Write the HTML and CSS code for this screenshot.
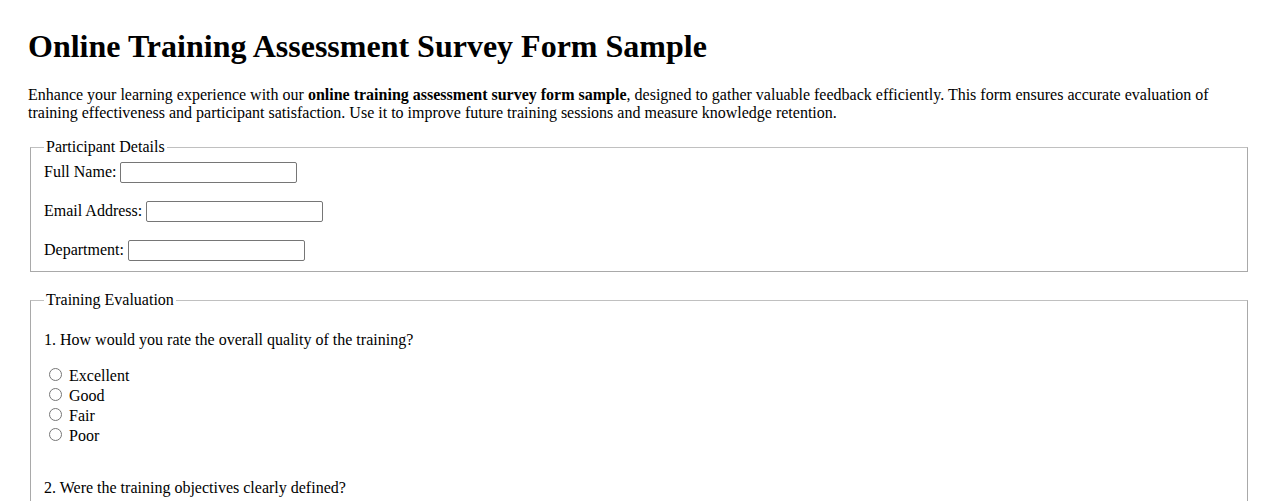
FILE: index.html
```html
<!DOCTYPE html>
<html lang="en">
<head>
<meta charset="utf-8">
<title>Online Training Assessment Survey Form Sample</title>
<link rel="stylesheet" href="styles.css">
</head>
<body>
<h1 class="title">Online Training Assessment Survey Form Sample</h1>
<p class="intro">Enhance your learning experience with our <strong>online training assessment survey form sample</strong>, designed to gather valuable feedback efficiently. This form ensures accurate evaluation of training effectiveness and participant satisfaction. Use it to improve future training sessions and measure knowledge retention.</p>
<form class="survey">
  <fieldset class="group">
    <legend class="group-title">Participant Details</legend>
    <label class="field">Full Name: <input class="text-input" type="text"></label><br><br>
    <label class="field">Email Address: <input class="text-input" type="email"></label><br><br>
    <label class="field">Department: <input class="text-input" type="text"></label>
  </fieldset>
  <fieldset class="group">
    <legend class="group-title">Training Evaluation</legend>
    <p class="question">1. How would you rate the overall quality of the training?</p>
    <div class="options">
      <label><input class="radio" type="radio" name="q1"> Excellent</label><br>
      <label><input class="radio" type="radio" name="q1"> Good</label><br>
      <label><input class="radio" type="radio" name="q1"> Fair</label><br>
      <label><input class="radio" type="radio" name="q1"> Poor</label><br><br>
    </div>
    <p class="question">2. Were the training objectives clearly defined?</p>
    <div class="options">
      <label><input class="radio" type="radio" name="q2"> Yes</label><br>
      <label><input class="radio" type="radio" name="q2"> No</label><br><br>
    </div>
  </fieldset>
</form>
</body>
</html>
```
FILE: styles.css
```css
body {
  margin: 8px;
  padding: 20px;
  font-family: "Liberation Serif", "Times New Roman", serif;
  font-size: 16px;
  color: #000;
  background: #fff;
}
.title {
  font-size: 32px;
  font-weight: bold;
  margin: 0 0 21px;
}
.intro {
  margin: 0 0 16px;
  line-height: 18px;
}
.group {
  margin: 0 2px 19px;
  padding: 6px 12px 10px 13px;
  border: 1px solid #a9a9a9;
  border-top-color: #c0c0c0;
  line-height: 18px;
}
.group-title {
  padding: 0 2px;
}
.text-input {
  box-sizing: border-box;
  width: 177px;
  height: 21px;
  border: 1px solid #767676;
  border-radius: 2px;
  padding: 1px 2px;
  font-family: "Liberation Sans", Arial, sans-serif;
  font-size: 13.33px;
  vertical-align: baseline;
}
.question {
  margin: 16px 0;
}
.radio {
  margin: 3px 3px 0 5px;
}
```
